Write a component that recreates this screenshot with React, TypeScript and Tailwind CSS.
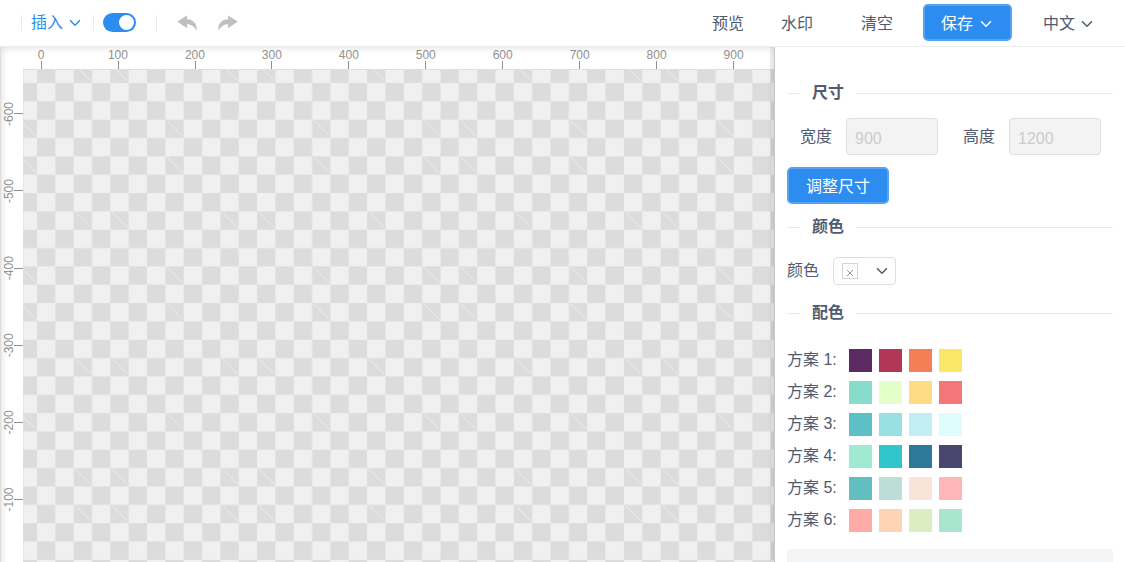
import React from 'react';
import { IoIosArrowDown, IoIosRedo, IoIosUndo } from 'react-icons/io';

const CELL = 18.34;

const columns = [0, 100, 200, 300, 400, 500, 600, 700, 800, 900];
const rows = [-600, -500, -400, -300, -200, -100];

// hairline marks on the checkerboard, [columns, rows]
const marks: [number[], number[]][] = [
    [[3, 5, 11, 13, 19, 27, 33, 35], [0, 8, 16, 22, 24]],
    [[0, 8, 16, 22, 24, 30, 38], [3, 5, 11, 13, 19]],
];

const schemes = [
    ['#5c2a62', '#b23655', '#f37f57', '#fae768'],
    ['#88dccb', '#e4ffca', '#fedc86', '#f47678'],
    ['#5cc0c6', '#9ae0e3', '#c2edf2', '#dffcfc'],
    ['#9fead0', '#30c6cb', '#2e789b', '#48466d'],
    ['#61c0bf', '#bbded6', '#fae3d9', '#ffb6b9'],
    ['#ffaaa5', '#ffd3b6', '#dcedc1', '#a8e6cf'],
];

const Separator: React.FC = () => <span className="h-4 w-px bg-[#e8eaec]" />;

const SectionTitle: React.FC<{ title: string }> = ({ title }) => (
    <div className="flex h-6 items-center">
        <span className="h-px w-[14px] bg-[#e8eaec]" />
        <h3 className="mr-3 ml-[11px] text-base font-semibold">{title}</h3>
        <span className="h-px flex-1 bg-[#e8eaec]" />
    </div>
);

const SizeField: React.FC<{ id: string; label: string; value: string }> = ({ id, label, value }) => (
    <div className="flex items-center gap-[14px]">
        <label htmlFor={id}>{label}</label>
        <input
            id={id}
            defaultValue={value}
            disabled
            className="h-[37px] w-[92px] rounded border border-[#dcdee2] bg-[#f3f3f3] px-2 pt-1 text-[#cccccc]"
        />
    </div>
);

const Stage: React.FC = () => (
    <main className="relative min-w-0 flex-1 overflow-hidden">
        <svg className="block h-full w-full" fontFamily="Liberation Sans, sans-serif" fontSize="12">
            <defs>
                <pattern id="checker" x="14" y="14" width={CELL * 2} height={CELL * 2} patternUnits="userSpaceOnUse">
                    <rect width={CELL * 2} height={CELL * 2} fill="#f0f0f0" />
                    <rect x={CELL} width={CELL} height={CELL} fill="#dddcdd" />
                    <rect y={CELL} width={CELL} height={CELL} fill="#dddcdd" />
                </pattern>
            </defs>
            <svg x="23" y="22" width="100%" height="100%">
                <rect width="100%" height="100%" fill="url(#checker)" />
                {marks.map(([cols, lines]) =>
                    lines.map((r) =>
                        cols.map((c) => {
                            const x = 14 + (c - 1) * CELL;
                            const y = 14 + (r - 1) * CELL;
                            return (
                                <line
                                    key={`${c}-${r}`}
                                    x1={x + 2}
                                    y1={y + 1}
                                    x2={x + 17}
                                    y2={y + 16}
                                    stroke="#eeeeee"
                                />
                            );
                        })
                    )
                )}
                <path d="M0 2000V.5H2000" fill="none" stroke="#dedede" />
            </svg>
            {columns.map((n, i) => (
                <g key={n}>
                    <text x={41 + i * 76.95} y="12" textAnchor="middle" fill="#929292">{n}</text>
                    <rect x={Math.round(40.6 + i * 76.95)} y="14" width="1" height="8" fill="#8f8f8f" />
                </g>
            ))}
            {rows.map((n, i) => (
                <g key={n}>
                    <text textAnchor="middle" fill="#929292" transform={`translate(13 ${67 + i * 77.1}) rotate(-90)`}>{n}</text>
                    <rect x="14" y={Math.round(66.3 + i * 77.1)} width="9" height="1" fill="#8f8f8f" />
                </g>
            ))}
        </svg>
        <div className="pointer-events-none absolute inset-x-0 top-0 -bottom-4 border-l border-[#dddddd] shadow-[inset_0_0_9px_rgba(0,0,0,0.15)]" />
        <div className="pointer-events-none absolute inset-y-0 right-0 w-[5px] border-r border-[#c8c8c8] bg-black/5" />
    </main>
);

export default function App() {
    return (
        <div className="flex h-screen flex-col overflow-hidden bg-white font-['Liberation_Sans','Noto_Sans_CJK_SC',sans-serif] text-base text-[#515a6e]">
            <header className="flex h-[47px] shrink-0 items-center justify-between border-b border-[#eeeeee] pr-[30px] pb-px pl-[21px]">
                <div className="flex items-center">
                    <Separator />
                    <button className="ml-[9px] flex items-center gap-1 text-[#2d8cf0]">
                        插入
                        <IoIosArrowDown className="size-4" />
                    </button>
                    <span className="ml-[10px] flex items-center gap-[9px]">
                        <Separator />
                        <input
                            type="checkbox"
                            aria-label="标尺"
                            defaultChecked
                            className="relative h-[19px] w-[33px] appearance-none rounded-full bg-[#2d8cf0] before:absolute before:top-[2px] before:right-[2px] before:size-[15px] before:rounded-full before:bg-white"
                        />
                    </span>
                    <span className="ml-5 flex items-center gap-[19px] text-[#c0c0c0]">
                        <Separator />
                        <button aria-label="撤销"><IoIosUndo className="size-[22px]" /></button>
                        <button aria-label="重做"><IoIosRedo className="size-[22px]" /></button>
                    </span>
                </div>
                <div className="flex items-center">
                    <button className="mr-[37px] pt-[3px]">预览</button>
                    <button className="mr-12 pt-[3px]">水印</button>
                    <button className="mr-[30px] pt-[3px]">清空</button>
                    <button className="mr-[31px] flex h-[37px] items-center gap-[5px] rounded-[5px] border-2 border-[#57a3f3] bg-[#2d8cf0] pt-[3px] pr-4 pl-4 text-white">
                        保存
                        <IoIosArrowDown className="size-4" />
                    </button>
                    <button className="flex items-center gap-1 pt-[3px]">
                        中文
                        <IoIosArrowDown className="size-4" />
                    </button>
                </div>
            </header>
            <div className="flex min-h-0 flex-1">
                <Stage />
                <aside className="w-[350px] shrink-0 overflow-hidden px-3 pt-[34px]">
                    <SectionTitle title="尺寸" />
                    <div className="mt-[13px] flex gap-[25px] pl-[13px]">
                        <SizeField id="width" label="宽度" value="900" />
                        <SizeField id="height" label="高度" value="1200" />
                    </div>
                    <button className="mt-3 h-[37px] rounded-[5px] border-2 border-[#57a3f3] bg-[#2d8cf0] px-[17px] pt-[3px] text-white">
                        调整尺寸
                    </button>
                    <div className="mt-[11px]">
                        <SectionTitle title="颜色" />
                    </div>
                    <div className="mt-[18px] flex items-center gap-[14px]">
                        <span>颜色</span>
                        <button
                            aria-label="颜色"
                            className="flex h-7 w-[63px] items-center justify-between rounded border border-[#dcdee2] pr-[5px] pl-2"
                        >
                            <span className="flex size-4 items-end justify-center border border-[#d5d5d5]">
                                <svg viewBox="0 0 10 10" className="size-[10px]" stroke="#999999">
                                    <path d="M2 2l6 6M8 2l-6 6" />
                                </svg>
                            </span>
                            <IoIosArrowDown className="size-4" />
                        </button>
                    </div>
                    <div className="mt-4">
                        <SectionTitle title="配色" />
                    </div>
                    <div className="mt-[19px]">
                        {schemes.map((colors, i) => (
                            <div key={i} className="flex h-8 items-center gap-3">
                                <span>方案 {i + 1}:</span>
                                <span className="flex gap-[7px]">
                                    {colors.map((color) => (
                                        <span key={color} className="size-[23px]" style={{ backgroundColor: color }} />
                                    ))}
                                </span>
                            </div>
                        ))}
                    </div>
                    <div className="mt-[13px] h-20 rounded bg-[#f4f5f7]" />
                </aside>
            </div>
        </div>
    );
}
